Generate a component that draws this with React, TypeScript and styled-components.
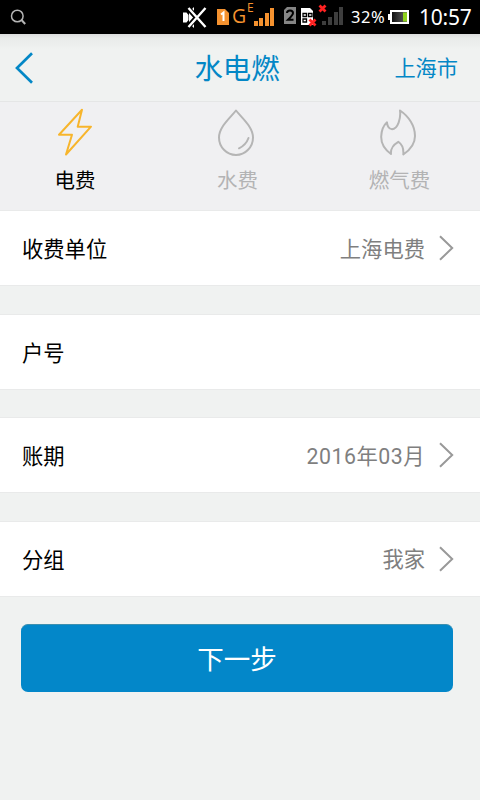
import React from "react";
import styled, { createGlobalStyle } from "styled-components";

const GlobalStyle = createGlobalStyle`
  * { box-sizing: border-box; }
  body {
    margin: 0;
    background: #f0f2f1;
    font-family: Roboto, "Noto Sans CJK SC", sans-serif;
  }
`;

const Screen = styled.div`
  width: 480px;
  height: 800px;
  overflow: hidden;
  background: #f0f2f1;
  display: flex;
  flex-direction: column;
`;

const StatusBar = styled.header`
  height: 34px;
  flex: none;
  background: #000;
  display: flex;
  align-items: center;
  padding-left: 10px;
  color: #fff;
  font-family: "Noto Sans", sans-serif;
`;

const StatusIcon = styled.svg<{ $gap: number }>`
  display: block;
  flex: none;
  margin-left: ${(p) => p.$gap}px;
`;

const StatusText = styled.span<{ $gap: number; $width: number; $size: number; $spacing?: number }>`
  flex: none;
  margin-left: ${(p) => p.$gap}px;
  width: ${(p) => p.$width}px;
  font-size: ${(p) => p.$size}px;
  letter-spacing: ${(p) => p.$spacing ?? 0}px;
  line-height: 34px;
  white-space: nowrap;
`;

const Network = styled(StatusText)`
  color: #f5922f;
  line-height: 31px;
  height: 34px;
  font-family: "Open Sans", sans-serif;
`;

const NetworkType = styled(Network)`
  line-height: 16px;
`;

const NavBar = styled.nav`
  height: 68px;
  flex: none;
  display: grid;
  grid-template-columns: 120px 1fr 120px;
  align-items: center;
  padding: 0 22px 0 14px;
  color: #0387c6;
  border-bottom: 1px solid #e5e6e6;
  background: linear-gradient(#dcdddd, #e9ebea 4px, #eceeed 10px, #f0f2f1 15px);
`;

const Title = styled.h1`
  margin: 0 0 0 2px;
  padding-top: 4px;
  text-align: center;
  font-size: 28.4px;
  font-weight: 400;
  line-height: 40px;
`;

const City = styled.span`
  padding-top: 2px;
  text-align: right;
  font-size: 21.2px;
  line-height: 30px;
`;

const Tabs = styled.div`
  height: 108px;
  flex: none;
  display: grid;
  grid-template-columns: 150px 175px 149px;
  background: #f0f0f2;
`;

const Tab = styled.div<{ $active?: boolean }>`
  display: flex;
  flex-direction: column;
  align-items: center;
  padding-top: 6px;
  font-size: 20.5px;
  line-height: 30px;
  color: ${(p) => (p.$active ? "#000" : "#b3b3b4")};
`;

const TabIcon = styled.svg`
  display: block;
  width: 36px;
  height: 48px;
  margin-bottom: 10px;
  margin-right: 3px;
  fill: none;
  stroke-width: 2;
  stroke-linejoin: round;
  stroke-linecap: round;
`;

const Form = styled.main`
  display: flex;
  flex-direction: column;
  gap: 27.5px;
`;

const Row = styled.div`
  height: 76px;
  flex: none;
  display: flex;
  align-items: center;
  padding: 0 26px 0 22px;
  background: #fff;
  border-top: 1px solid #e9eaea;
  border-bottom: 1px solid #e9eaea;
  font-size: 21.3px;
  line-height: 32px;
`;

const Label = styled.span`
  flex: 1;
  padding-top: 4px;
  color: #000;
`;

const Value = styled.span<{ $spacing: number }>`
  color: #7f7f7f;
  padding-top: 3px;
  margin-right: 14px;
  letter-spacing: ${(p) => p.$spacing}px;
`;

const NextButton = styled.button`
  margin: 0 27px 0 21px;
  height: 68px;
  border: 0;
  border-top: 1px solid #3c8faf;
  border-radius: 7px;
  background: #0387c9;
  color: #fff;
  font-family: inherit;
  font-size: 26.5px;
  line-height: 38px;
  padding: 3px 0 0;
`;

const Chevron = () => (
  <svg width="15" height="26" viewBox="0 0 15 26" fill="none" stroke="#999" strokeWidth="2">
    <path d="M1 1.2 13.2 13 1 24.8" />
  </svg>
);

const rows = [
  { label: "收费单位", value: "上海电费", spacing: 0 },
  { label: "户号", value: "", spacing: 0 },
  { label: "账期", value: "2016年03月", spacing: 0.5 },
  { label: "分组", value: "我家", spacing: 0 },
];

export default function App() {
  return (
    <Screen>
      <GlobalStyle />
      <StatusBar>
        <StatusIcon $gap={0} width="17" height="34" fill="none" stroke="#b5b5b5" strokeWidth="1.5">
          <circle cx="7.3" cy="16" r="5.8" />
          <path d="m11.5 20 3.7 4" strokeWidth="2" />
        </StatusIcon>
        <StatusIcon $gap={156} width="24" height="34">
          <path d="M0 12.5h3.5l2 2.5v5l-2 2.5H0zM6 12l5-5v21l-5-5z" fill="#fff" />
          <path d="M5 8 22 27M22 8 5 27" stroke="#000" strokeWidth="5" />
          <path d="M5.5 8 22.5 27M22.5 8 5.5 27" stroke="#fff" strokeWidth="2.4" />
        </StatusIcon>
        <StatusIcon $gap={10} width="13" height="34">
          <path d="M0 9h8l4 4v12H0z" fill="#f5922f" />
          <path d="M4 14.5 6.5 12.5V21" fill="none" stroke="#fff" strokeWidth="2" />
        </StatusIcon>
        <Network $gap={2} $width={15} $size={19.5}>G</Network>
        <NetworkType $gap={0} $width={7} $size={12}>E</NetworkType>
        <StatusIcon $gap={0} width="21" height="34" fill="#f5922f">
          <path d="M0 21h4v5H0zM5 18h4v8H5zM11 13h4v13h-4zM16 8h4v18h-4z" />
        </StatusIcon>
        <StatusIcon $gap={9} width="13" height="34">
          <path d="M0 10l3-3h9v17H0z" fill="#858585" />
          <path d="M3 13q0-2.5 3-2.5t3 2.5q0 2-5 6.8H9.5" fill="none" stroke="#000" strokeWidth="2" />
        </StatusIcon>
        <StatusIcon $gap={4} width="17" height="34">
          <path d="M0 8h9l3 3v14H0z" fill="#fff" />
          <path d="M2 13.5h3.5v3H2zM7.5 13.5H11v3H7.5zM2 19h3.5v3H2z" fill="none" stroke="#000" strokeWidth="1.3" />
          <path d="m8.5 19.5 6 6m0-6-6 6" stroke="#f22" strokeWidth="2.8" />
        </StatusIcon>
        <StatusIcon $gap={0} width="27" height="34">
          <path d="M4 21h4v4H4zM10 17h4v8h-4zM16 12h4v13h-4zM21 7h4v18h-4z" fill="#3e3e3e" />
          <path d="m1.5 5.5 6 6m0-6-6 6" stroke="#f22" strokeWidth="2.8" />
        </StatusIcon>
        <StatusText $gap={6} $width={37} $size={16.5} $spacing={0.6}>32%</StatusText>
        <StatusIcon $gap={0} width="22" height="34">
          <defs>
            <linearGradient id="cell">
              <stop offset="0" stopColor="#111" />
              <stop offset="1" stopColor="#666" />
            </linearGradient>
          </defs>
          <path d="M0 14h2v-4h19v14H2v-4H0z" fill="#fff" />
          <path d="M4 12h15v10H4z" fill="url(#cell)" />
          <path d="M15 12.5h4v9h-4z" fill="#8ed21b" />
        </StatusIcon>
        <StatusText $gap={9} $width={54} $size={21} $spacing={-0.2}>10:57</StatusText>
      </StatusBar>

      <NavBar>
        <svg width="20" height="34" viewBox="0 0 20 34" fill="none" stroke="#0387c6" strokeWidth="2.7">
          <path d="M18 2.3 3 17 18 31.7" />
        </svg>
        <Title>水电燃</Title>
        <City>上海市</City>
      </NavBar>

      <Tabs>
        <Tab $active>
          <TabIcon viewBox="0 0 36 48" stroke="#f7b52c">
            <path d="M26 1.7 21.7 18.7H35L10 46.5 16 26.7H3Z" />
          </TabIcon>
          电费
        </Tab>
        <Tab>
          <TabIcon viewBox="0 0 36 48" stroke="#b5b5b5">
            <path d="M18 2.5C12 10 1 19 1 29.5C1 39 8.5 47 18 47S35 39 35 29.5C35 19 24 10 18 2.5Z" />
            <path d="M30.5 30Q28 37 21 40.3" />
          </TabIcon>
          水费
        </Tab>
        <Tab>
          <TabIcon viewBox="0 0 36 48" stroke="#b5b5b5">
            <path d="M20 2.5C29 8.5 35 18 35 28C35 36 30 42 23.3 46.5C24 39 21.5 36 18.3 33.8C13 37 10.5 40 11 46C4 41 1 36 1.2 28.5C1.5 22 4 17 7 14.3C7 17 8.5 21.2 12 21.2C18 21 21 10 20 2.5Z" />
          </TabIcon>
          燃气费
        </Tab>
      </Tabs>

      <Form>
        {rows.map((row) => (
          <Row key={row.label}>
            <Label>{row.label}</Label>
            {row.value && (
              <>
                <Value $spacing={row.spacing}>{row.value}</Value>
                <Chevron />
              </>
            )}
          </Row>
        ))}
        <NextButton type="button">下一步</NextButton>
      </Form>
    </Screen>
  );
}
